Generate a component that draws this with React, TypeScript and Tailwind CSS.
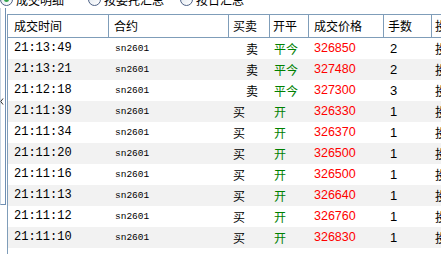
import React from 'react';

type Trade = {
  time: string;
  symbol: string;
  side: '买' | '卖';
  offset: '开' | '平今';
  price: string;
  qty: number;
};

const trades: Trade[] = [
  { time: '21:13:49', symbol: 'sn2601', side: '卖', offset: '平今', price: '326850', qty: 2 },
  { time: '21:13:21', symbol: 'sn2601', side: '卖', offset: '平今', price: '327480', qty: 2 },
  { time: '21:12:18', symbol: 'sn2601', side: '卖', offset: '平今', price: '327300', qty: 3 },
  { time: '21:11:39', symbol: 'sn2601', side: '买', offset: '开', price: '326330', qty: 1 },
  { time: '21:11:34', symbol: 'sn2601', side: '买', offset: '开', price: '326370', qty: 1 },
  { time: '21:11:20', symbol: 'sn2601', side: '买', offset: '开', price: '326500', qty: 1 },
  { time: '21:11:16', symbol: 'sn2601', side: '买', offset: '开', price: '326500', qty: 1 },
  { time: '21:11:13', symbol: 'sn2601', side: '买', offset: '开', price: '326640', qty: 1 },
  { time: '21:11:12', symbol: 'sn2601', side: '买', offset: '开', price: '326760', qty: 1 },
  { time: '21:11:10', symbol: 'sn2601', side: '买', offset: '开', price: '326830', qty: 1 },
];

const cols = 'grid grid-cols-[101px_120px_41px_39px_75px_48px_1fr]';
const cjk = "font-['Noto_Sans_CJK_SC',sans-serif]";
const mono = "font-['Liberation_Mono','Noto_Sans_CJK_SC',monospace]";
const sans = "font-['Liberation_Sans','Noto_Sans_CJK_SC',sans-serif]";

function Radio({ label, checked }: { label: string; checked?: boolean }) {
  return (
    <div className="flex items-center gap-[3px]">
      <span className="flex h-[13px] w-[13px] items-center justify-center rounded-full border border-[#4d6185] bg-gradient-to-br from-[#dfe6ee] to-white">
        {checked && <span className="h-[5px] w-[5px] rounded-full bg-[#2fa34a]" />}
      </span>
      <span className="text-[12px] text-black">{label}</span>
    </div>
  );
}

export default function App() {
  return (
    <div className={`flex h-[254px] w-[441px] flex-col overflow-hidden bg-white ${cjk}`}>
      <div className="h-[8px] overflow-hidden">
        <div className="-mt-[7px] flex h-[13px] items-center leading-[13px]">
          <div className="w-[88px]">
            <Radio label="成交明细" checked />
          </div>
          <div className="w-[92px]">
            <Radio label="按委托汇总" />
          </div>
          <Radio label="按日汇总" />
        </div>
      </div>

      <div className="flex flex-1">
        <div className="w-[7px] shrink-0">
          <div className="flex h-[197px] w-[6px] items-center border-l border-r border-b border-l-[#c9d6e3] border-r-[#6f8fb3] border-b-[#6f8fb3]">
            <svg width="4" height="7" viewBox="0 0 4 7" className="-ml-[1px] -mt-[9px]">
              <path d="M3 0.5 L0.8 3.5 L3 6.5" fill="none" stroke="#333" strokeWidth="1" />
            </svg>
          </div>
        </div>

        <div className="mt-[6px] flex-1 border-l border-t border-[#7f9db9]">
          <div className={`${cols} h-[23px] border-b border-[#7f9db9] text-[12px] leading-[22px] text-black`}>
            <div className="border-r border-[#7f9db9] pl-[6px]">成交时间</div>
            <div className="border-r border-[#7f9db9] pl-[5px]">合约</div>
            <div className="border-r border-[#7f9db9] pl-[4px]">买卖</div>
            <div className="border-r border-[#7f9db9] pl-[3px]">开平</div>
            <div className="border-r border-[#7f9db9] pl-[5px]">成交价格</div>
            <div className="border-r border-[#7f9db9] pl-[4px]">手数</div>
            <div className="whitespace-nowrap pl-[3px]">投保</div>
          </div>

          {trades.map((t, i) => (
            <div
              key={t.time}
              className={`${cols} h-[21px] items-center text-[12px] leading-[21px] text-black ${
                i % 2 === 1 ? 'bg-[#f2f2f2]' : 'bg-white'
              }`}
            >
              <div className={`${mono} pl-[6px]`}>{t.time}</div>
              <div className={`${mono} pl-[6px] text-[9.5px]`}>{t.symbol}</div>
              <div className={t.side === '卖' ? 'pl-[17px]' : 'pl-[4px]'}>{t.side}</div>
              <div className="pl-[4px] text-[#008000]">{t.offset}</div>
              <div className={`${sans} pl-[5px] text-[12.5px] text-[#ff0000]`}>{t.price}</div>
              <div className={`${sans} pl-[6px] text-[13px]`}>{t.qty}</div>
              <div className="whitespace-nowrap pl-[3px]">投机</div>
            </div>
          ))}
        </div>
      </div>
    </div>
  );
}
